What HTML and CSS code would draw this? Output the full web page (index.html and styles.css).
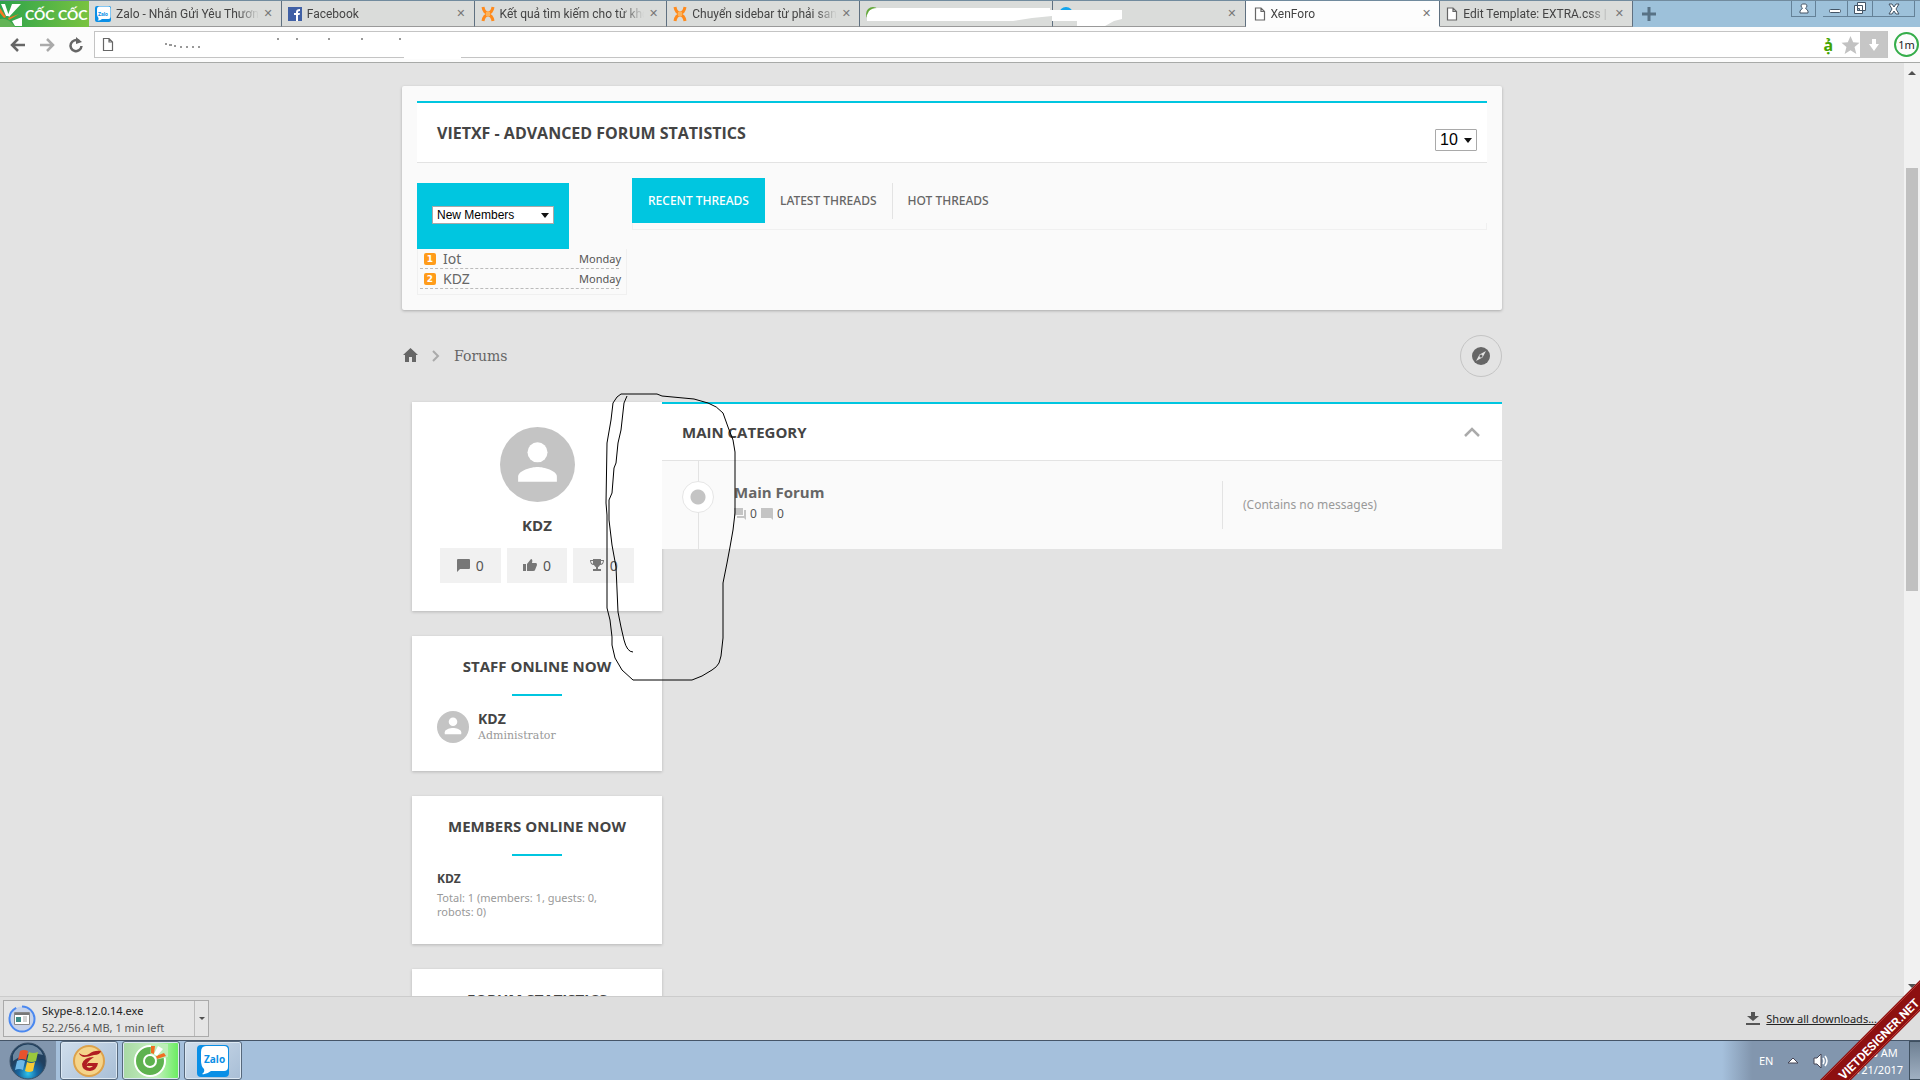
FILE: index.html
```html
<!DOCTYPE html>
<html lang="en">
<head>
    <meta charset="UTF-8">
    <meta name="viewport" content="width=device-width, initial-scale=1.0">
    <title>XenForo</title>
    <link rel="stylesheet" href="styles.css">
</head>
<body>
    <svg class="sprite" width="0" height="0" aria-hidden="true">
        <symbol id="file" viewBox="0 0 12 14"><path d="M1.5 1h5.500l3.500 3.500v8.500h-9z M7 1v3.500h3.500" fill="#fff" stroke="#666" stroke-width="1.200"/></symbol>
        <symbol id="xen" viewBox="0 0 14 16"><path d="M2 1q1 6 5 6t5-6M2 15q1-6 5-6t5 6" fill="none" stroke="#ff8a1c" stroke-width="3"/><path d="M5 6h4v4h-4z" fill="#ffb257"/></symbol>
        <symbol id="user" viewBox="0 0 24 24"><circle cx="12" cy="12" r="12" fill="#c4c4c4"/><circle cx="12" cy="8.100" r="3.200" fill="#fff"/><path d="M5.800 17.500v-1.600c0-2 4.200-3.100 6.200-3.100s6.200 1.100 6.200 3.100v1.600z" fill="#fff"/></symbol>
        <symbol id="zalo" viewBox="0 0 32 32"><rect width="32" height="32" rx="4" fill="#0a8fe6"/><path d="M9 1h18q4 0 4 4v17q0 4-4 4H14q-5 4-9 3 3-2 2-5-3-3-3-8V7q0-6 5-6z" fill="#fff"/></symbol>
    </svg>

    <header class="tab-strip">
        <div class="brand">
            <svg width="23" height="26" viewBox="0 0 23 26"><path d="M0 18q8-2 15 8H0z" fill="#63b456"/><path d="M1 3h4l4 12-3 0zM12 3h9L9 16l-1-2zM12 20l10-4v9h-7z" fill="#fff"/><path d="M0 7l6 9-2 1-4-5zM19 13L9 19l-1-2z" fill="#f57921"/></svg>
            <span>CỐC CỐC</span>
        </div>
        <nav class="tabs">
            <div class="tab">
                <svg width="16" height="16"><use href="#zalo"/><text x="3" y="10" class="tiny-logo">Zalo</text></svg>
                <span class="tab-title">Zalo - Nhắn Gửi Yêu Thương</span><button class="close" aria-label="Close tab">✕</button>
            </div>
            <div class="tab">
                <svg width="14" height="14"><rect width="14" height="14" fill="#4060a5"/><path d="M8 14V8H6V6h2V5q0-3 4-3v2q-2 0-2 1v1h2l-.5 2H10v6z" fill="#fff"/></svg>
                <span class="tab-title">Facebook</span><button class="close" aria-label="Close tab">✕</button>
            </div>
            <div class="tab">
                <svg width="14" height="16"><use href="#xen"/></svg>
                <span class="tab-title">Kết quả tìm kiếm cho từ khóa</span><button class="close" aria-label="Close tab">✕</button>
            </div>
            <div class="tab">
                <svg width="14" height="16"><use href="#xen"/></svg>
                <span class="tab-title">Chuyển sidebar từ phải sang</span><button class="close" aria-label="Close tab">✕</button>
            </div>
            <div class="tab">
                <svg width="14" height="14"><circle cx="7" cy="7" r="7" fill="#64a83a"/><path d="M1 10a7 7 0 0 0 12 0z" fill="#5b2d1c"/></svg>
                <span class="tab-title"></span><button class="close" aria-label="Close tab">✕</button>
                <svg class="eraser" width="260" height="20" viewBox="0 0 260 20"><path d="M2 4Q5 1 10 1H183V3H255V12L247 14L238 19H210V14H185V9L165 11L146 14H0V8z" fill="#fff"/></svg>
            </div>
            <div class="tab">
                <svg width="14" height="14"><circle cx="7" cy="7" r="7" fill="#12a5ed"/></svg>
                <span class="tab-title"></span><button class="close" aria-label="Close tab">✕</button>
            </div>
            <div class="tab active">
                <svg width="12" height="14"><use href="#file"/></svg>
                <span class="tab-title">XenForo</span><button class="close" aria-label="Close tab">✕</button>
            </div>
            <div class="tab">
                <svg width="12" height="14"><use href="#file"/></svg>
                <span class="tab-title">Edit Template: EXTRA.css | X</span><button class="close" aria-label="Close tab">✕</button>
            </div>
        </nav>
        <button class="new-tab" aria-label="New tab"><svg width="14" height="14"><path d="M7 0v14M0 7h14" stroke="#587285" stroke-width="3"/></svg></button>
        <div class="window-buttons">
            <button class="win user-btn" aria-label="Profile"><svg width="12" height="12" viewBox="0 0 12 12"><path d="M6 1a2 2 0 0 1 1.500 4L10 8v2H2V8l2.500-3A2 2 0 0 1 6 1z" fill="#fff" stroke="#456"/></svg></button>
            <button class="win" aria-label="Minimize"><svg width="12" height="12"><rect x=".5" y="6.500" width="11" height="3" rx="1" fill="#fff" stroke="#456"/></svg></button>
            <button class="win" aria-label="Restore"><svg width="14" height="13"><path d="M4.500 .5h8v8h-8zM1.500 3.500h8v8h-8z" fill="#fff" stroke="#456"/><path d="M4.500 6.500h2v2h-2z" fill="#9dc1da" stroke="#456"/></svg></button>
            <button class="win wide" aria-label="Close"><svg width="12" height="12"><path d="M1 1h3l2 3 2-3h3L8 6l3 5H8L6 8l-2 3H1l3-5z" fill="#fff" stroke="#456"/></svg></button>
        </div>
    </header>

    <div class="toolbar">
        <button class="nav-btn" aria-label="Back"><svg width="16" height="16"><path d="M15 8H3M8 2L2 8l6 6" fill="none" stroke="#666" stroke-width="2.500"/></svg></button>
        <button class="nav-btn" aria-label="Forward"><svg width="16" height="16"><path d="M1 8h12M8 2l6 6-6 6" fill="none" stroke="#aaa" stroke-width="2.500"/></svg></button>
        <button class="nav-btn" aria-label="Reload"><svg width="16" height="16"><path d="M11 4a5.500 5.500 0 1 0 2.500 5" fill="none" stroke="#666" stroke-width="2.500"/><path d="M8 7V0l6 5z" fill="#666"/></svg></button>
        <div class="address">
            <svg width="12" height="15"><use href="#file"/></svg>
            <input type="text" aria-label="Address">
            <svg class="specks" width="370" height="22"><path d="M50 6h2m2 1h3m2 1h2m4 1h2m4 0h2m4 0h2m4 0h2M162 1h2m17 0h2m30 0h2m31 0h2m36 0h2" stroke="#333"/><path d="M289 19h57v2h-57z" fill="#fff"/></svg>
            <b class="spell">ạ̉</b>
            <svg width="19" height="18" viewBox="0 0 20 20"><path d="M10 0l3 7 7 .5-5.500 4.700L16.500 20 10 15.700 3.500 20l2-7.800L0 7.500 7 7z" fill="#c2c2c2"/></svg>
            <button class="save" aria-label="Download"><svg width="12" height="12"><path d="M4 0h4v5h3l-5 7-5-7h3z" fill="#fff"/></svg></button>
        </div>
        <span class="timer">1m</span>
    </div>

    <div class="viewport">
        <main class="page">
            <section class="stats">
                <div class="stats-head">
                    <h2>VIETXF - ADVANCED FORUM STATISTICS</h2>
                    <span class="drop count"><select aria-label="Rows"><option>10</option></select></span>
                </div>
                <div class="stats-body">
                    <div class="members">
                        <div class="members-pick">
                            <span class="drop kind"><select aria-label="Member list"><option>New Members</option></select></span>
                        </div>
                        <ol class="member-list">
                            <li><i>1</i><a href="#">Iot</a><span>Monday</span></li>
                            <li><i>2</i><a href="#">KDZ</a><span>Monday</span></li>
                        </ol>
                    </div>
                    <div class="threads">
                        <div class="thread-tabs">
                            <a class="current" href="#">RECENT THREADS</a>
                            <a href="#">LATEST THREADS</a>
                            <a href="#">HOT THREADS</a>
                        </div>
                    </div>
                </div>
            </section>

            <nav class="breadcrumb">
                <a href="#" aria-label="Home"><svg width="15" height="14" viewBox="0 0 15 14"><path d="M7.500 0L15 7h-2v7H9V9H6v5H2V7H0z" fill="#666"/></svg></a>
                <svg width="8" height="12"><path d="M1 1l5 5-5 5" fill="none" stroke="#aaa" stroke-width="2"/></svg>
                <a href="#">Forums</a>
                <button class="jump" aria-label="Open quick navigation"><svg width="18" height="18" viewBox="0 0 18 18"><circle cx="9" cy="9" r="9" fill="#666"/><path d="M14 4l-3.500 6.500L4 14l3.500-6.500z" fill="#e3e3e3"/><circle cx="9" cy="9" r="1.500" fill="#666"/></svg></button>
            </nav>

            <div class="columns">
                <aside class="sidebar">
                    <section class="card profile">
                        <svg width="75" height="75"><use href="#user"/></svg>
                        <a class="name" href="#">KDZ</a>
                        <div class="counters">
                            <span><svg width="13" height="13"><path d="M1 0h11q1 0 1 1v8q0 1-1 1H3l-3 3V1q0-1 1-1z" fill="#777"/></svg>0</span>
                            <span><svg width="14" height="13"><path d="M0 5h3v7H0zM4 5l4-5q2 0 1 4h4q1 0 1 2l-2 5q0 1-2 1H4z" fill="#777"/></svg>0</span>
                            <span><svg width="14" height="13"><path d="M3 0h8v1h3q0 5-4 5-1 2-2 2v2h3v2H3v-2h3V8Q5 8 4 6 0 6 0 1h3zM3 2H1q0 2 2 3zM11 2v3q2-1 2-3z" fill="#777"/></svg>0</span>
                        </div>
                    </section>
                    <section class="card">
                        <h3>STAFF ONLINE NOW</h3>
                        <div class="staff">
                            <svg width="32" height="32"><use href="#user"/></svg>
                            <div><a href="#">KDZ</a><small>Administrator</small></div>
                        </div>
                    </section>
                    <section class="card">
                        <h3>MEMBERS ONLINE NOW</h3>
                        <a class="online" href="#">KDZ</a>
                        <p>Total: 1 (members: 1, guests: 0, robots: 0)</p>
                    </section>
                    <section class="card">
                        <h3>FORUM STATISTICS</h3>
                    </section>
                </aside>

                <section class="category">
                    <div class="category-head">
                        <h2>MAIN CATEGORY</h2>
                        <button aria-label="Collapse"><svg width="16" height="10"><path d="M1 9l7-7 7 7" fill="none" stroke="#aaa" stroke-width="2.500"/></svg></button>
                    </div>
                    <div class="node">
                        <div class="node-line"><span></span></div>
                        <div class="node-text">
                            <h3><a href="#">Main Forum</a></h3>
                            <div class="node-stats">
                                <svg width="12" height="12"><path d="M0 0h9v7H2L0 9zM10 2h2v10l-2-2H3V8h7z" fill="#c4c4c4"/></svg>0
                                <svg width="12" height="12"><path d="M0 0h11q1 0 1 1v11l-2-2H0z" fill="#c4c4c4"/></svg>0
                            </div>
                        </div>
                        <div class="node-last">(Contains no messages)</div>
                    </div>
                </section>

                <svg class="scribble" width="140" height="300" viewBox="600 390 140 300">
                    <path d="M621 394H657L662 396L694 399L708 403Q717 406 723 413L728 427L733 440L735 452V513L733 530L730 547L727 563L723 583V638L721 656L719 663Q717 667 712 670L702 676L692 680H633L622 670L615 658L612 645V637L610 620L607 608V515L606 503L607 443L611 420L613 403L617 397Z"/>
                    <path d="M627 396L624 403L621 430L618 443L616 463L614 468L612 493L609 500V520L612 545L616 567L618 612L621 627L624 640Q627 652 633 652"/>
                </svg>
            </div>
        </main>
        <div class="scrollbar"><i class="arrow"></i><span class="thumb"></span><i class="arrow down"></i></div>
    </div>

    <div class="downloads">
        <div class="download">
            <svg width="28" height="28"><circle cx="14" cy="14" r="12.500" fill="#c7d2e8" stroke="#4a88f0" stroke-width="2" stroke-dasharray="72 7" transform="rotate(-90 14 14)"/><path d="M6.500 7.500h15v12h-15z" fill="#fff" stroke="#888"/><path d="M7 9h14" stroke="#777" stroke-width="2"/><path d="M8 12h5v5H8z" fill="#3e8c88"/><path d="M15 12h4m-4 2h4m-4 2h4" stroke="#aaa"/></svg>
            <div><span>Skype-8.12.0.14.exe</span><span class="progress">52.2/56.4 MB, 1 min left</span></div>
            <button aria-label="Download options"><i class="arrow down"></i></button>
        </div>
        <svg width="14" height="13"><path d="M5 0h4v4h4L7 9 1 4h4zM0 11h14v2H0z" fill="#555"/></svg>
        <a href="#">Show all downloads...</a>
    </div>

    <footer class="taskbar">
        <button class="start" aria-label="Start">
            <svg width="38" height="38" viewBox="0 0 38 38"><defs><radialGradient id="orb" cy=".85"><stop offset="0" stop-color="#30c5ec"/><stop offset=".5" stop-color="#1769a5"/><stop offset="1" stop-color="#21405f"/></radialGradient></defs><circle cx="19" cy="19" r="18" fill="url(#orb)" stroke="#3c5268"/><path d="M4 13a16 16 0 0 1 30 0Q20 8 4 19z" fill="#9fb8cb" opacity=".6"/><path d="M11 9q4-2 8 0l-2 9q-4-2-8 0z" fill="#e8522d"/><path d="M20 10q4 2 9 0l-2 9q-4 2-9 0z" fill="#9bc83c"/><path d="M8 19q4-2 8 0l-2 9q-4-2-8 0z" fill="#6eb8e8"/><path d="M18 20q4 2 8 0l-2 9q-4 2-8 0z" fill="#f8cb37"/></svg>
        </button>
        <button class="task" aria-label="Garena">
            <svg width="32" height="32"><circle cx="16" cy="16" r="15" fill="#f5d48a" stroke="#dda24b" stroke-width="2"/><path d="M6 8q5 4 10 1 5-4 12-3-1 4-7 4-6 2-10 2-4-1-5-4zM21 12q-10 0-12 7 0 7 8 7 7-1 8-8H15l-2 3h7q-3 3-6 1-2-4 7-10z" fill="#b01d22"/></svg>
        </button>
        <button class="task green" aria-label="Coc Coc">
            <svg width="34" height="34"><circle cx="16" cy="17" r="15" fill="#5eb24f" stroke="#fff" stroke-width="2"/><path d="M16 17L17 0h17v13z" fill="#bdeeb8"/><circle cx="16" cy="17" r="7" fill="#fff"/><circle cx="16" cy="17" r="5" fill="#5eb24f"/><path d="M17 2h4l-1 8-3-1zM30 9l2 3-9 3-1-3z" fill="#f16d21"/><path d="M24 2l5 3-6 7-3-2z" fill="#fff"/></svg>
        </button>
        <button class="task" aria-label="Zalo">
            <svg width="32" height="32"><use href="#zalo"/><text x="7" y="18" class="zalo-text">Zalo</text></svg>
        </button>
        <div class="tray">
            <span>EN</span>
            <svg width="10" height="6"><path d="M5 0l5 5H0z" fill="#fff" stroke="#445"/></svg>
            <svg width="16" height="16"><path d="M1 5h3l4-4v14l-4-4H1z" fill="#fff" stroke="#445"/><path d="M10 5q2 3 0 6M12 3q4 5 0 10" fill="none" stroke="#fff" stroke-width="1.500"/></svg>
            <div class="clock"><span>11:08 AM</span><span>11/21/2017</span></div>
            <i class="peek"></i>
        </div>
    </footer>

    <svg class="ribbon" width="100" height="100" viewBox="0 0 100 100">
        <path d="M0 100L100 0V31L31 100z" fill="#8d1010"/>
        <path d="M2 100L100 2M29 100L100 29" stroke="#b83a35"/>
        <text x="62" y="62" transform="rotate(-45 62 62)">VIETDESIGNER.NET</text>
    </svg>
</body>
</html>
```
FILE: styles.css
```css
* {
    box-sizing: border-box;
}
body {
    margin: 0;
    height: 100vh;
    display: flex;
    flex-direction: column;
    overflow: hidden;
    background: #e3e3e3;
    color: #666;
    font-family: "Noto Sans", "Open Sans", sans-serif;
    font-size: 12px;
}
a {
    color: inherit;
    text-decoration: none;
}
button {
    padding: 0;
    border: 0;
    background: none;
    display: flex;
    align-items: center;
    justify-content: center;
}
svg {
    flex: none;
}
h2, h3, p, ol {
    margin: 0;
    padding: 0;
}
h2, h3 {
    font-family: "Open Sans", sans-serif;
    font-size: 15px;
    line-height: 20px;
    color: #444;
}
.sprite {
    position: absolute;
}

/* browser window */
.tab-strip {
    display: flex;
    flex: none;
    height: 27px;
    background: #9dc1da;
    border-top: 1px solid #718b9e;
    font-family: Roboto, sans-serif;
    color: #444;
}
.brand {
    display: flex;
    align-items: center;
    flex: none;
    gap: 2px;
    width: 89px;
    background: linear-gradient(90deg, #2ca34b, #79c340);
    color: #fff;
    font: bold 14px Lato, sans-serif;
    white-space: nowrap;
}
.tabs {
    display: flex;
    flex: 0 1 1544px;
    min-width: 0;
}
.tab {
    position: relative;
    display: flex;
    align-items: center;
    gap: 5px;
    flex: 1;
    min-width: 0;
    padding: 0 8px 0 6px;
    background: #dadcda;
    border-right: 1px solid #5f7080;
    border-bottom: 1px solid #999;
}
.tab.active {
    background: #fdfdfd;
    border-bottom-color: #fdfdfd;
    padding-left: 8px;
}
.tab-title {
    flex: 1;
    overflow: hidden;
    white-space: nowrap;
    -webkit-mask-image: linear-gradient(90deg, #000 85%, transparent);
    mask-image: linear-gradient(90deg, #000 85%, transparent);
}
.tiny-logo {
    font: bold 5px Roboto, sans-serif;
    fill: #0a8fe6;
}
.close {
    color: #777;
    font: bold 11px "DejaVu Sans", sans-serif;
}
.eraser {
    position: absolute;
    left: 7px;
    top: 6px;
    z-index: 1;
}
.new-tab {
    width: 32px;
}
.window-buttons {
    display: flex;
    height: 16px;
    margin-left: auto;
    padding-right: 5px;
}
.win {
    width: 25px;
    border: 1px solid #648197;
    border-top: 0;
    border-left-width: 0;
}
.user-btn {
    border-left-width: 1px;
    margin-right: 7px;
}
.wide {
    width: 42px;
}
.toolbar {
    display: flex;
    align-items: center;
    flex: none;
    height: 36px;
    padding: 0 1px 0 5px;
    background: #fcfcfc;
    border-bottom: 1px solid #a8aaa8;
}
.nav-btn {
    width: 26px;
    margin-right: 3px;
}
.address {
    position: relative;
    display: flex;
    align-items: center;
    flex: 1;
    height: 27px;
    margin: 0 6px 0 2px;
    padding-left: 7px;
    background: #fff;
    border: 1px solid #c4c4c4;
}
.address input {
    flex: 1;
    border: 0;
    background: none;
}
.specks {
    position: absolute;
    left: 20px;
    top: 6px;
}
.spell {
    color: #43a400;
    font-size: 16px;
    margin-right: 8px;
}
.save {
    width: 27px;
    height: 27px;
    background: #c6c6c6;
}
.timer {
    width: 25px;
    height: 25px;
    line-height: 21px;
    border: 2px solid #35ad4a;
    border-radius: 50%;
    text-align: center;
    font-size: 11px;
    color: #222;
}
.viewport {
    display: flex;
    flex: 1;
    min-height: 0;
    overflow: hidden;
}
.scrollbar {
    display: grid;
    grid-template-rows: 97fr 423fr 397fr;
    justify-items: center;
    width: 16px;
    padding: 8px 2px;
    background: #f1f1f1;
}
.thumb {
    width: 100%;
    background: #c0c0c0;
}
.arrow {
    align-self: start;
    border: 4px solid transparent;
    border-top: 0;
    border-bottom-color: #505050;
}
.arrow.down {
    align-self: end;
    border-top: 4px solid #505050;
    border-bottom: 0;
}

/* forum page */
.page {
    flex: 1;
    padding: 23px 402px 0;
}
.stats {
    padding: 15px;
    background: #fafafa;
    border-radius: 2px;
    box-shadow: 0 1px 3px rgba(0, 0, 0, 0.25);
}
.stats-head {
    display: flex;
    align-items: center;
    justify-content: space-between;
    height: 62px;
    padding: 0 10px 0 20px;
    background: #fff;
    border-top: 2px solid #00c6e0;
    border-bottom: 1px solid #e3e3e3;
}
.stats-head h2 {
    font-size: 16px;
}
.drop {
    position: relative;
    display: block;
}
.drop::after {
    content: "";
    position: absolute;
    right: 5px;
    top: 50%;
    border: 4px solid transparent;
    border-top: 5px solid #111;
    border-bottom: 0;
    margin-top: -2px;
}
.drop select {
    display: block;
    width: 100%;
    appearance: none;
    padding: 0 4px;
    border: 1px solid #a9a9a9;
    border-radius: 0;
    background: #fff;
    color: #000;
    font: 12px/16px "Liberation Sans", sans-serif;
}
.count {
    width: 42px;
    margin-top: 15px;
}
.count select {
    font-size: 16px;
    line-height: 20px;
    border-radius: 1px;
}
.stats-body {
    display: grid;
    grid-template-columns: 210px 1fr;
    gap: 5px;
    padding-top: 15px;
}
.members {
    padding-top: 5px;
}
.members-pick {
    width: 152px;
    height: 66px;
    padding: 23px 15px;
    background: #00c6e0;
}
.member-list {
    list-style: none;
    height: 46px;
    padding: 0 7px 0 2px;
    border: 1px solid #f0f0f0;
    border-top: 0;
}
.member-list li {
    display: flex;
    align-items: center;
    height: 20px;
    padding-left: 4px;
    border-bottom: 1px dashed #bbb;
}
.member-list i {
    width: 12px;
    height: 12px;
    margin-right: 7px;
    border-radius: 2px;
    background: #ff9c1a;
    color: #fff;
    font: bold 9px/12px "DejaVu Sans", sans-serif;
    text-align: center;
}
.member-list a {
    flex: 1;
    font-size: 14px;
}
.member-list span {
    margin-right: -2px;
    font-size: 11px;
    color: #555;
}
.thread-tabs {
    display: flex;
    align-items: center;
    height: 45px;
}
.thread-tabs a {
    padding: 0 15px;
    line-height: 36px;
    font-weight: 500;
    border-right: 1px solid #e3e3e3;
}
.thread-tabs .current {
    padding: 0 16px;
    line-height: 45px;
    background: #00c6e0;
    color: #fff;
    border: 0;
}
.thread-tabs a:last-child {
    border: 0;
}
.threads::after {
    content: "";
    display: block;
    height: 6px;
    border: 1px solid #f0f0f0;
    border-top: 0;
}
.breadcrumb {
    display: flex;
    align-items: center;
    gap: 14px;
    padding: 25px 0 25px 1px;
    font: 14px "DejaVu Serif", serif;
}
.jump {
    width: 42px;
    height: 42px;
    margin-left: auto;
    border: 1px solid #c4c4c4;
    border-radius: 50%;
}
.columns {
    position: relative;
    display: grid;
    grid-template-columns: 250px 1fr;
    align-items: start;
    padding-left: 10px;
}
.sidebar {
    display: grid;
    gap: 25px;
}
.card {
    padding: 20px 25px 25px;
    background: #fff;
    box-shadow: 0 1px 3px rgba(0, 0, 0, 0.2);
}
.card h3 {
    text-align: center;
}
.card h3::after {
    content: "";
    display: block;
    width: 50px;
    height: 2px;
    margin: 18px auto 15px;
    background: #00c6e0;
}
.profile {
    display: flex;
    flex-direction: column;
    align-items: center;
    padding-top: 25px;
    padding-bottom: 28px;
}
.name {
    margin: 13px 0;
    font: bold 15px/20px "Open Sans", sans-serif;
    color: #444;
}
.counters {
    display: grid;
    grid-template-columns: repeat(3, 1fr);
    gap: 6px;
    width: 194px;
}
.counters span {
    display: flex;
    align-items: center;
    justify-content: center;
    gap: 6px;
    height: 35px;
    background: #f1f1f1;
    color: #555;
    font-size: 14px;
}
.staff {
    display: flex;
    gap: 9px;
    height: 35px;
}
.staff a {
    display: block;
    font: bold 14px/16px "Open Sans", sans-serif;
    color: #444;
}
.staff small {
    display: block;
    font: 11px/18px "DejaVu Serif", serif;
    color: #999;
}
.online {
    display: block;
    font: bold 12px/16px "Open Sans", sans-serif;
    color: #444;
    padding-bottom: 4px;
}
.card p {
    padding-right: 20px;
    font-size: 11px;
    line-height: 14px;
    color: #999;
}
.category {
    background: #fafafa;
    border-top: 2px solid #00c6e0;
}
.category-head {
    display: flex;
    align-items: center;
    justify-content: space-between;
    height: 57px;
    padding: 0 22px 0 20px;
    background: #fff;
    border-bottom: 1px solid #e3e3e3;
}
.node {
    display: grid;
    grid-template-columns: 72px 1fr 280px;
    align-items: center;
    height: 88px;
}
.node-line {
    align-self: stretch;
    padding: 20px;
    background: linear-gradient(#e3e3e3, #e3e3e3) 36px 0 / 1px 100% no-repeat;
}
.node-line span {
    display: block;
    width: 32px;
    height: 32px;
    border: 1px solid #e6e6e6;
    border-radius: 50%;
    background: radial-gradient(circle, #c4c4c4 7px, #fff 8px);
}
.node-text {
    align-self: start;
    padding-top: 20px;
}
.node-text h3 {
    line-height: 22px;
    color: #666;
}
.node-stats {
    display: flex;
    align-items: center;
    gap: 4px;
    line-height: 22px;
    color: #555;
}
.node-last {
    padding-left: 20px;
    border-left: 1px solid #e3e3e3;
    font-size: 12px;
    line-height: 48px;
    color: #999;
}
.scribble {
    position: absolute;
    left: 198px;
    top: -12px;
    fill: none;
    stroke: #000;
}

/* download shelf and taskbar */
.downloads {
    display: flex;
    align-items: center;
    flex: none;
    height: 44px;
    padding: 0 43px 0 3px;
    gap: 6px;
    background: #dedede;
    border-top: 1px solid #ccc;
    color: #222;
}
.downloads a {
    text-decoration: underline;
    font-size: 11px;
}
.download {
    display: flex;
    align-items: center;
    gap: 6px;
    width: 206px;
    height: 37px;
    margin-right: auto;
    padding-left: 4px;
    border: 1px solid #aaa;
    background: #e5e5e5;
    font-size: 11px;
}
.download span {
    display: block;
    line-height: 17px;
    white-space: nowrap;
}
.download .progress {
    color: #555;
}
.download button {
    align-self: stretch;
    width: 14px;
    margin-left: auto;
    border-left: 1px solid #bbb;
}
.download .arrow {
    align-self: center;
    border-width: 3px;
    border-bottom-width: 0;
}
.taskbar {
    display: flex;
    flex: none;
    gap: 4px;
    height: 40px;
    background: #a5c0dc;
    border-top: 1px solid #455568;
}
.start {
    width: 56px;
    background: #8296ae;
}
.task {
    width: 58px;
    border: 1px solid #56687c;
    border-radius: 3px;
    background: linear-gradient(135deg, #d0deec, #a8bed6);
    box-shadow: inset 0 0 0 1px #dce8f3;
}
.green {
    background: linear-gradient(90deg, #a8d8a4, #c5f1c0 60%, #66ed5c);
}
.zalo-text {
    font: bold 10px "Open Sans", sans-serif;
    fill: #0a8fe6;
}
.tray {
    display: flex;
    align-items: center;
    gap: 15px;
    width: 198px;
    margin-left: auto;
    padding-left: 37px;
    background: linear-gradient(90deg, #a5c0dc, #8296ae 30px);
    color: #fff;
    font-size: 11px;
}
.clock {
    margin-left: auto;
    text-align: center;
}
.clock span {
    display: block;
    line-height: 17px;
}
.peek {
    align-self: stretch;
    width: 14px;
    flex: none;
    margin-left: -9px;
    border: 1px solid #3f5060;
    background: linear-gradient(#6e8093, #a0b0c2);
}
.ribbon {
    position: absolute;
    right: 0;
    bottom: 0;
}
.ribbon text {
    font: bold 12px "Liberation Sans Narrow", Roboto, sans-serif;
    fill: #fff;
    text-anchor: middle;
}
```
